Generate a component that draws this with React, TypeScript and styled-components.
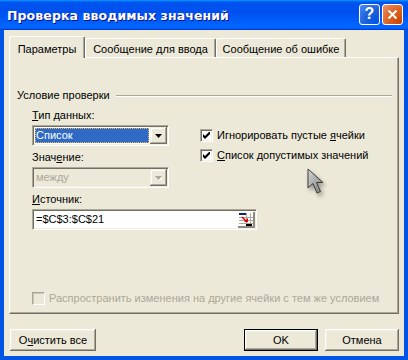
import styled, { createGlobalStyle } from 'styled-components'

const GlobalStyle = createGlobalStyle`
  html, body { margin: 0; padding: 0; }
  body {
    background: #ffffff;
    font-family: "Liberation Sans", Arial, sans-serif;
    font-size: 11px;
    color: #000;
  }
  * { box-sizing: border-box; }
`

const Window = styled.div`
  width: 408px;
  height: 360px;
  display: flex;
  flex-direction: column;
  background: #0055e5;
`

const TitleBar = styled.div`
  height: 30px;
  flex: none;
  display: flex;
  align-items: center;
  padding: 2px 5px 0 7px;
  background: linear-gradient(180deg, #0997ff, #0053ee 8%, #0050ee 40%, #0066ff 88%, #0066ff 93%, #005bff 95%, #003dd7 96%, #003dd7);
`

const Title = styled.div`
  flex: 1;
  color: #fff;
  font-family: "DejaVu Sans", Verdana, sans-serif;
  font-weight: bold;
  font-size: 12.5px;
  letter-spacing: 0.1px;
  text-shadow: 1px 1px #0f1089;
  margin-top: -2px;
`

const CaptionButton = styled.div<{ $kind: 'help' | 'close' }>`
  width: 21px;
  height: 21px;
  margin-left: 2px;
  margin-top: -4px;
  border: 1px solid #fff;
  border-radius: 3px;
  display: flex;
  align-items: center;
  justify-content: center;
  color: #fff;
  font-family: "Liberation Sans", Arial, sans-serif;
  font-weight: bold;
  font-size: 16px;
  background: ${p => p.$kind === 'help'
    ? 'radial-gradient(circle at 90% 90%, #0054e9 0%, #2263d5 55%, #4484f5 90%, #4484f5 100%)'
    : 'radial-gradient(circle at 90% 90%, #cc4600 0%, #dc6527 55%, #e88a5f 90%, #f0a988 100%)'};
`

const Client = styled.div`
  flex: 1;
  margin: 0 4px 4px 4px;
  background: #ece9d8;
  padding: 6px 5px 0 5px;
  display: flex;
  flex-direction: column;
`

const TabStrip = styled.div`
  height: 21px;
  display: flex;
  align-items: flex-end;
`

const Tab = styled.div<{ $active?: boolean; $w: number }>`
  width: ${p => p.$w}px;
  height: ${p => (p.$active ? 22 : 19)}px;
  margin-bottom: ${p => (p.$active ? -1 : 0)}px;
  position: relative;
  z-index: ${p => (p.$active ? 1 : 0)};
  background: #ece9d8;
  border-top: 1px solid #fff;
  border-left: 1px solid #fff;
  border-right: 1px solid #716f64;
  border-top-left-radius: 2px;
  border-top-right-radius: 2px;
  box-shadow: inset -1px 0 #aca899;
  padding-top: ${p => (p.$active ? 6 : 4)}px;
  line-height: 13px;
  text-align: center;
  white-space: nowrap;
`

const Panel = styled.div`
  height: 257px;
  position: relative;
  display: flex;
  flex-direction: column;
  border-top: 1px solid #fff;
  border-left: 1px solid #fff;
  border-right: 1px solid #716f64;
  border-bottom: 1px solid #716f64;
  box-shadow: inset -1px -1px #aca899;
  padding: 31px 6px 8px 7px;
`

const GroupHeader = styled.div`
  display: flex;
  align-items: center;
  height: 13px;
  line-height: 13px;
`

const GroupLine = styled.div`
  flex: 1;
  margin-left: 6px;
  height: 2px;
  border-top: 1px solid #aca899;
  border-bottom: 1px solid #fff;
`

const GroupBody = styled.div`
  margin: 7px 0 0 15px;
`

const TopRow = styled.div`
  display: flex;
`

const LeftCol = styled.div`
  width: 137px;
`

const RightCol = styled.div`
  margin-left: 31px;
  padding-top: 20px;
  display: flex;
  flex-direction: column;
  gap: 7px;
`

const Label = styled.div<{ $disabled?: boolean }>`
  line-height: 13px;
  height: 13px;
  margin-bottom: 3px;
  white-space: nowrap;
  color: ${p => (p.$disabled ? '#aca899' : '#000')};
`

const Sunken = styled.div<{ $disabled?: boolean; $w?: number }>`
  width: ${p => (p.$w ? `${p.$w}px` : 'auto')};
  height: 21px;
  display: flex;
  padding: 1px;
  margin-bottom: 5px;
  background: ${p => (p.$disabled ? '#ece9d8' : '#fff')};
  border-top: 1px solid #aca899;
  border-left: 1px solid #aca899;
  border-right: 1px solid #fff;
  border-bottom: 1px solid #fff;
  box-shadow: inset 1px 1px #716f64, inset -1px -1px #f1efe2;
`

const ComboValue = styled.div<{ $selected?: boolean; $disabled?: boolean }>`
  flex: 1;
  margin: 1px;
  padding-left: 1px;
  line-height: 15px;
  background: ${p => (p.$selected ? '#316ac5' : 'transparent')};
  color: ${p => (p.$selected ? '#fff' : p.$disabled ? '#aca899' : '#000')};
  outline: ${p => (p.$selected ? '1px dotted #e8b84a' : 'none')};
  outline-offset: -1px;
`

const DropButton = styled.div`
  width: 17px;
  height: 17px;
  flex: none;
  display: flex;
  align-items: center;
  justify-content: center;
  background: #ece9d8;
  box-shadow: inset -1px -1px #716f64, inset 1px 1px #f1efe2, inset -2px -2px #aca899, inset 2px 2px #fff;
`

const InputText = styled.div`
  flex: 1;
  padding: 1px 0 0 2px;
  line-height: 15px;
`

const RangeIcon = styled.div`
  width: 17px;
  height: 17px;
  flex: none;
`

const CheckRow = styled.div<{ $disabled?: boolean }>`
  display: flex;
  align-items: center;
  height: 13px;
  line-height: 13px;
  white-space: nowrap;
  color: ${p => (p.$disabled ? '#aca899' : '#000')};
`

const BottomCheck = styled(CheckRow)`
  margin: auto 0 0 15px;
`

const Box = styled.div<{ $disabled?: boolean }>`
  width: 13px;
  height: 13px;
  flex: none;
  margin-right: 4px;
  display: flex;
  align-items: center;
  justify-content: center;
  background: ${p => (p.$disabled ? '#ece9d8' : '#fff')};
  border-top: 1px solid #aca899;
  border-left: 1px solid #aca899;
  border-right: 1px solid #fff;
  border-bottom: 1px solid #fff;
  box-shadow: ${p => (p.$disabled ? 'inset 1px 1px #c9c6b8' : 'inset 1px 1px #716f64, inset -1px -1px #f1efe2')};
`

const Cursor = styled.svg`
  position: absolute;
  left: 297px;
  top: 110px;
  filter: drop-shadow(2px 3px 2px rgba(0, 0, 0, 0.35));
`

const ButtonRow = styled.div`
  margin-top: 15px;
  padding-left: 1px;
  display: flex;
  gap: 7px;
`

const Button = styled.button<{ $default?: boolean; $w: number }>`
  width: ${p => p.$w}px;
  height: 22px;
  padding: 0;
  font-family: "Liberation Sans", Arial, sans-serif;
  font-size: 11px;
  color: #000;
  background: #ece9d8;
  border: ${p => (p.$default ? '1px solid #000' : 'none')};
  box-shadow: inset -1px -1px #716f64, inset 1px 1px #fff, inset -2px -2px #aca899, inset 2px 2px #f1efe2;
`

const Spacer = styled.div`
  flex: 1;
`

function Arrow({ color }: { color: string }) {
  return (
    <svg width="7" height="4" viewBox="0 0 7 4">
      {color !== '#000' && <polygon points="1,1 8,1 4.5,5" fill="#fff" />}
      <polygon points="0,0 7,0 3.5,4" fill={color} />
    </svg>
  )
}

function Check() {
  return (
    <svg width="7" height="7" viewBox="0 0 7 7">
      <path d="M0 2 L2 4 L6 0 L7 0 L7 2 L2 7 L0 5 Z" fill="#000" />
    </svg>
  )
}

function Checkbox({ label, checked, disabled }: { label: React.ReactNode; checked?: boolean; disabled?: boolean }) {
  return (
    <>
      <Box $disabled={disabled}>{checked && <Check />}</Box>
      {label}
    </>
  )
}

export default function App() {
  return (
    <Window>
      <GlobalStyle />
      <TitleBar>
        <Title>Проверка вводимых значений</Title>
        <CaptionButton $kind="help">?</CaptionButton>
        <CaptionButton $kind="close">
          <svg width="11" height="11" viewBox="0 0 11 11">
            <path d="M1.5 1.5 L9.5 9.5 M9.5 1.5 L1.5 9.5" stroke="#fff" strokeWidth="2" />
          </svg>
        </CaptionButton>
      </TitleBar>
      <Client>
        <TabStrip>
          <Tab $active $w={76}>Параметры</Tab>
          <Tab $w={131}>Сообщение для ввода</Tab>
          <Tab $w={130}>Сообщение об ошибке</Tab>
        </TabStrip>
        <Panel>
          <GroupHeader>
            Условие проверки
            <GroupLine />
          </GroupHeader>
          <GroupBody>
            <TopRow>
              <LeftCol>
                <Label><u>Т</u>ип данных:</Label>
                <Sunken>
                  <ComboValue $selected>Список</ComboValue>
                  <DropButton><Arrow color="#000" /></DropButton>
                </Sunken>
                <Label>Знач<u>е</u>ние:</Label>
                <Sunken $disabled>
                  <ComboValue $disabled>между</ComboValue>
                  <DropButton><Arrow color="#aca899" /></DropButton>
                </Sunken>
              </LeftCol>
              <RightCol>
                <CheckRow>
                  <Checkbox checked label={<span>Игнорировать пустые <u>я</u>чейки</span>} />
                </CheckRow>
                <CheckRow>
                  <Checkbox checked label={<span><u>С</u>писок допустимых значений</span>} />
                </CheckRow>
              </RightCol>
            </TopRow>
            <Label><u>И</u>сточник:</Label>
            <Sunken $w={225}>
              <InputText>=$C$3:$C$21</InputText>
              <RangeIcon>
                <svg width="17" height="17" viewBox="0 0 17 17">
                  <rect x="0" y="0" width="17" height="17" fill="#fff" />
                  <rect x="1" y="2" width="7" height="2" fill="#0a246a" />
                  <path d="M8.5 2 V15 M12.5 2 V15 M1 6.5 H15 M1 9.5 H15 M1 12.5 H15" stroke="#aca899" strokeWidth="1" />
                  <rect x="8" y="13" width="6" height="2" fill="#000" />
                  <path d="M4 6 L9 11" stroke="#e00000" strokeWidth="1.6" />
                  <polygon points="6,11 10,11 10,7" fill="#e00000" />
                  <rect x="15" y="1" width="2" height="16" fill="#8e8b7e" />
                  <rect x="0" y="15" width="17" height="2" fill="#8e8b7e" />
                </svg>
              </RangeIcon>
            </Sunken>
          </GroupBody>
          <BottomCheck $disabled>
            <Checkbox disabled label="Распространить изменения на другие ячейки с тем же условием" />
          </BottomCheck>
          <Cursor width="20" height="30" viewBox="0 0 20 30">
            <defs>
              <linearGradient id="cg" x1="0" y1="0" x2="1" y2="1">
                <stop offset="0" stopColor="#d8d8d8" />
                <stop offset="1" stopColor="#7a7a7a" />
              </linearGradient>
            </defs>
            <path d="M1 1 L1 20 L6 15.5 L10 25 L13.5 23.5 L9.5 14.5 L16 14.5 Z" fill="url(#cg)" stroke="#3c3c3c" strokeWidth="1" strokeLinejoin="round" />
          </Cursor>
        </Panel>
        <ButtonRow>
          <Button $w={86}>О<u>ч</u>истить все</Button>
          <Spacer />
          <Button $default $w={74}>OK</Button>
          <Button $w={74}>Отмена</Button>
        </ButtonRow>
      </Client>
    </Window>
  )
}
